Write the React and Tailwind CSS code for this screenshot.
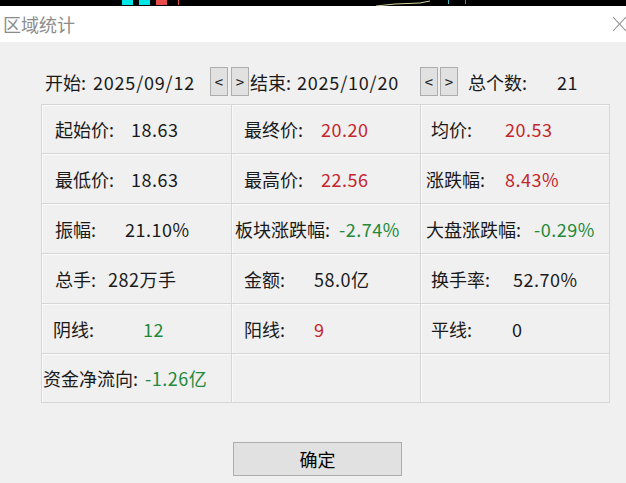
import React from "react";

const RED = "text-[#c4262c]";
const GREEN = "text-[#23893a]";

// each cell: label, value, colour, label offset, value offset (px from cell left)
const rows = [
  [
    { label: "起始价:", value: "18.63", lx: "pl-[13px]", vw: "w-[89px]" },
    { label: "最终价:", value: "20.20", color: RED, lx: "pl-[12px]", vw: "w-[89px]" },
    { label: "均价:", value: "20.53", color: RED, lx: "pl-[10px]", vw: "w-[84px]" },
  ],
  [
    { label: "最低价:", value: "18.63", lx: "pl-[13px]", vw: "w-[89px]" },
    { label: "最高价:", value: "22.56", color: RED, lx: "pl-[12px]", vw: "w-[89px]" },
    { label: "涨跌幅:", value: "8.43%", color: RED, lx: "pl-[5px]", vw: "w-[84px]" },
  ],
  [
    { label: "振幅:", value: "21.10%", lx: "pl-[13px]", vw: "w-[83px]" },
    { label: "板块涨跌幅:", value: "-2.74%", color: GREEN, lx: "pl-[3px]", vw: "w-[107px]" },
    { label: "大盘涨跌幅:", value: "-0.29%", color: GREEN, lx: "pl-[5px]", vw: "w-[113px]" },
  ],
  [
    { label: "总手:", value: "282万手", lx: "pl-[13px]", vw: "w-[66px]" },
    { label: "金额:", value: "58.0亿", lx: "pl-[12px]", vw: "w-[82px]" },
    { label: "换手率:", value: "52.70%", lx: "pl-[10px]", vw: "w-[92px]" },
  ],
  [
    { label: "阴线:", value: "12", color: GREEN, lx: "pl-[11px]", vw: "w-[101px]" },
    { label: "阳线:", value: "9", color: RED, lx: "pl-[12px]", vw: "w-[82px]" },
    { label: "平线:", value: "0", lx: "pl-[10px]", vw: "w-[91px]" },
  ],
  [
    { label: "资金净流向:", value: "-1.26亿", color: GREEN, lx: "pl-[1px]", vw: "w-[103px]" },
    null,
    null,
  ],
];

const rowHeights = ["h-[49px]", "h-[50px]", "h-[50px]", "h-[50px]", "h-[50px]", "h-[49px]"];
const colWidths = ["w-[190px]", "w-[189px]", "w-[189px]"];

const Cell = ({ cell, width }) => (
  <div
    className={`${width} h-full flex items-center border-r border-[#d6d6d6] shadow-[inset_1px_1px_0_#fafafa]`}
  >
    {cell && (
      <>
        <span className={`${cell.vw} ${cell.lx} shrink-0 whitespace-nowrap text-[#1a1a1a]`}>
          {cell.label}
        </span>
        <span className={`whitespace-nowrap tracking-[0.5px] ${cell.color || "text-[#1a1a1a]"}`}>
          {cell.value}
        </span>
      </>
    )}
  </div>
);

const ArrowBtn = ({ children }) => (
  <button className="w-[18px] h-[29px] shrink-0 flex items-center justify-center bg-[#e1e1e1] border border-[#adadad] text-[15px] leading-none text-[#1a1a1a]">
    {children}
  </button>
);

const App = () => {
  return (
    <div
      className="w-[626px] h-[483px] bg-[#f0f0f0] overflow-hidden flex flex-col"
      style={{ fontFamily: '"Noto Sans CJK SC", "Microsoft YaHei", sans-serif' }}
    >
      {/* chart strip behind the dialog */}
      <svg width="626" height="6" className="block shrink-0 bg-black">
        <rect x="122" y="0" width="11" height="5" fill="#00e5e5" />
        <rect x="139" y="0" width="11" height="5" fill="#00e5e5" />
        <rect x="156" y="0" width="11" height="5" fill="#e84c4c" />
        <rect x="178" y="0" width="1" height="5" fill="#e84c4c" />
        <polyline points="376,6 395,4 420,3 430,1" fill="none" stroke="#d8d49a" strokeWidth="1" />
        <rect x="448" y="0" width="1" height="4" fill="#3fb7c8" />
        <rect x="465" y="0" width="1" height="4" fill="#e84c4c" />
      </svg>

      {/* title bar */}
      <div className="h-[36px] shrink-0 bg-white flex items-center justify-between">
        <span className="pl-[3px] text-[18px] text-[#8c8c8c] leading-none">区域统计</span>
        <svg width="14" height="16" viewBox="0 0 14 16">
          <path d="M1 1 L14 15 M14 1 L1 15" stroke="#8c8c8c" strokeWidth="1.1" fill="none" />
        </svg>
      </div>

      {/* body */}
      <div className="flex flex-col text-[18px] leading-none">
        <div className="h-[29px] mt-[25px] flex items-center text-[#1a1a1a]">
          <div className="w-[210px] pl-[45px] shrink-0 flex whitespace-nowrap">
            <span className="w-[48px]">开始:</span>
            <span className="tracking-[0.8px]">2025/09/12</span>
          </div>
          <ArrowBtn>&lt;</ArrowBtn>
          <div className="w-[3px] shrink-0" />
          <ArrowBtn>&gt;</ArrowBtn>
          <div className="w-[171px] pl-[1px] shrink-0 flex whitespace-nowrap">
            <span className="w-[47px]">结束:</span>
            <span className="tracking-[0.8px]">2025/10/20</span>
          </div>
          <ArrowBtn>&lt;</ArrowBtn>
          <div className="w-[2px] shrink-0" />
          <ArrowBtn>&gt;</ArrowBtn>
          <span className="w-[99px] pl-[10px] shrink-0 whitespace-nowrap">总个数:</span>
          <span className="tracking-[0.5px]">21</span>
        </div>

        <div className="mt-[8px] ml-[41px] w-[569px] border-t border-l border-[#d6d6d6]">
          {rows.map((row, i) => (
            <div key={i} className={`${rowHeights[i]} flex border-b border-[#d6d6d6]`}>
              {row.map((cell, j) => (
                <Cell key={j} cell={cell} width={colWidths[j]} />
              ))}
            </div>
          ))}
        </div>

        <div className="mt-[39px] pl-[233px]">
          <button className="w-[169px] h-[34px] bg-[#e1e1e1] border border-[#adadad] text-[18px] text-black flex items-center justify-center">
            确定
          </button>
        </div>
      </div>
    </div>
  );
};

export default App;
